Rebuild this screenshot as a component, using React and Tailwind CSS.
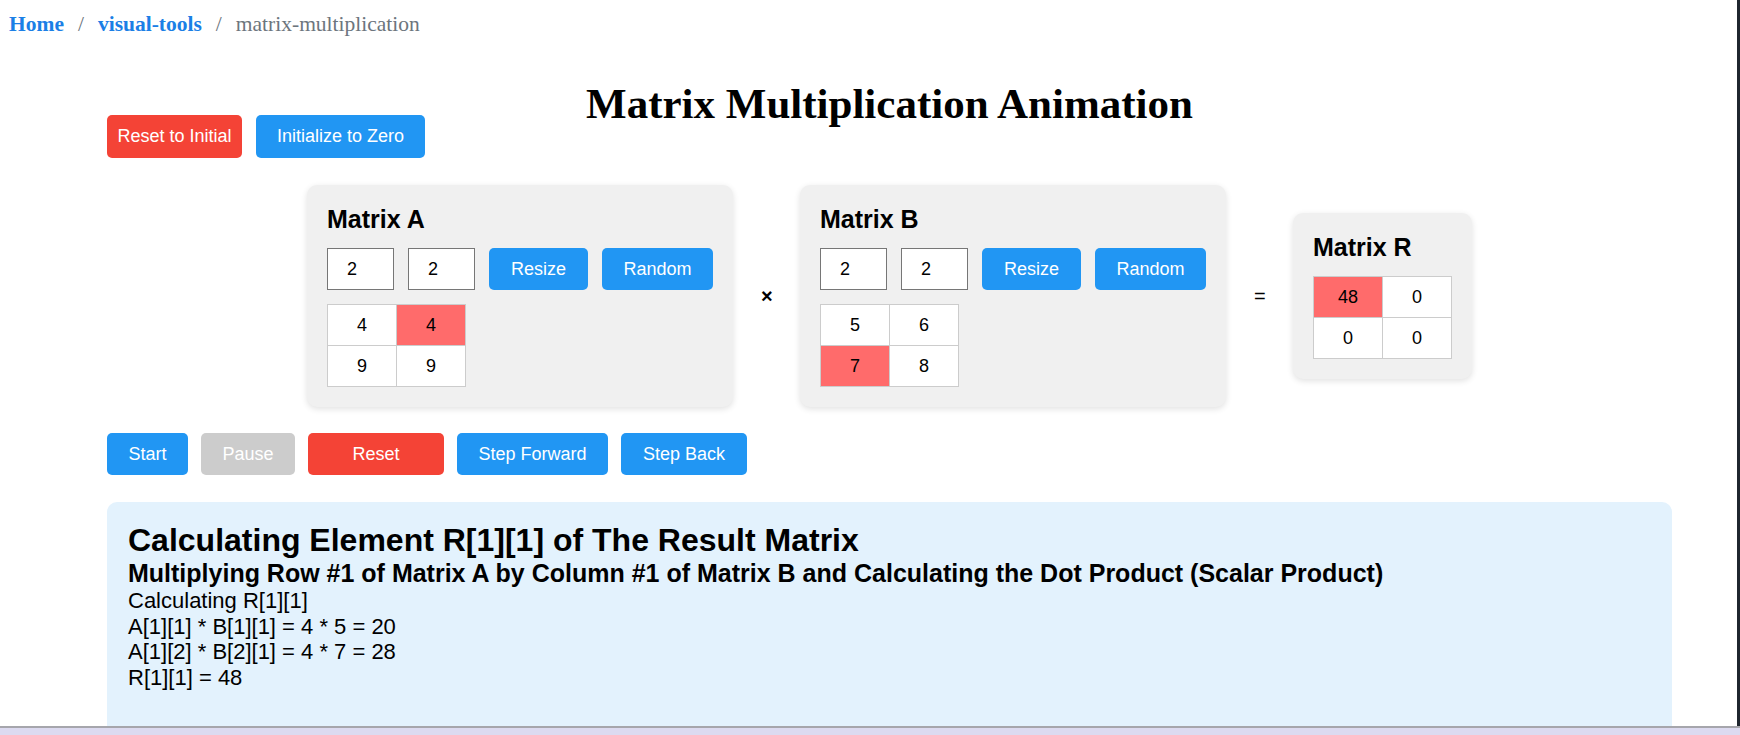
import { useState } from "react";

// cell values for the three matrices
const matrixA = [
  [4, 4],
  [9, 9],
];
const matrixB = [
  [5, 6],
  [7, 8],
];
const matrixR = [
  [48, 0],
  [0, 0],
];

function Grid({ values, hi }) {
  return (
    <div className="grid grid-cols-[69px_69px] w-fit border-l border-t border-[#cccccc]">
      {values.map((row, i) =>
        row.map((v, j) => (
          <div
            key={`${i}-${j}`}
            className={
              "h-[41px] flex items-center justify-center border-r border-b border-[#cccccc] text-[18px] " +
              (hi[0] === i && hi[1] === j ? "bg-[#ff6b6b]" : "bg-white")
            }
          >
            {v}
          </div>
        ))
      )}
    </div>
  );
}

function MatrixCard({ name, values, hi, sizable }) {
  return (
    <div className="bg-[#f0f0f0] rounded-[10px] p-5 shadow-[0_2px_6px_rgba(0,0,0,0.12)]">
      <h3 className="text-[25px] leading-[29px] font-bold mb-[14px]">Matrix {name}</h3>
      {sizable && (
        <div className="flex gap-[14px] mb-[14px]">
          <input
            type="text"
            defaultValue="2"
            className="w-[67px] h-[42px] border border-[#767676] bg-white pl-[19px] text-[18px] outline-none"
          />
          <input
            type="text"
            defaultValue="2"
            className="w-[67px] h-[42px] border border-[#767676] bg-white pl-[19px] text-[18px] outline-none"
          />
          <button className="w-[99px] h-[42px] bg-[#2196f3] text-white text-[18px] rounded-[5px]">
            Resize
          </button>
          <button className="w-[111px] h-[42px] bg-[#2196f3] text-white text-[18px] rounded-[5px]">
            Random
          </button>
        </div>
      )}
      <Grid values={values} hi={hi} />
    </div>
  );
}

export default function App() {
  const [running, setRunning] = useState(false);

  return (
    <div className="relative h-[735px] overflow-hidden bg-white text-black font-['Liberation_Sans',Arial,sans-serif]">
      {/* breadcrumb */}
      <nav className="pl-[9px] pt-[12px] text-[21.5px] leading-[24px] font-['Liberation_Serif','Times_New_Roman',serif]">
        <a className="font-bold text-[#1b7fe6]">Home</a>
        <span className="text-[#6c757d] mx-[14px]">/</span>
        <a className="font-bold text-[#1b7fe6]">visual-tools</a>
        <span className="text-[#6c757d] mx-[14px]">/</span>
        <span className="text-[#6c757d]">matrix-multiplication</span>
      </nav>

      <div className="ml-[107px] w-[1565px]">
        <h1 className="mt-[42px] text-center text-[43px] leading-[52px] font-bold font-['Liberation_Serif','Times_New_Roman',serif]">
          Matrix Multiplication Animation
        </h1>

        <div className="-mt-[15px] flex gap-[14px]">
          <button className="w-[135px] h-[43px] bg-[#f44336] text-white text-[18px] rounded-[5px]">
            Reset to Initial
          </button>
          <button className="w-[169px] h-[43px] bg-[#2196f3] text-white text-[18px] rounded-[5px]">
            Initialize to Zero
          </button>
        </div>

        {/* matrices */}
        <div className="mt-[27px] flex items-center justify-center gap-[28px]">
          <MatrixCard name="A" values={matrixA} hi={[0, 1]} sizable />
          <span className="w-[11px] text-center text-[20px] font-bold">×</span>
          <MatrixCard name="B" values={matrixB} hi={[1, 0]} sizable />
          <span className="w-[11px] text-center text-[20px]">=</span>
          <MatrixCard name="R" values={matrixR} hi={[0, 0]} />
        </div>

        {/* controls */}
        <div className="mt-[26px] flex gap-[13px]">
          <button
            onClick={() => setRunning(true)}
            className="w-[81px] h-[42px] bg-[#2196f3] text-white text-[18px] rounded-[5px]"
          >
            Start
          </button>
          <button
            disabled={!running}
            className="w-[94px] h-[42px] bg-[#cccccc] text-white text-[18px] rounded-[5px]"
          >
            Pause
          </button>
          <button className="w-[136px] h-[42px] bg-[#f44336] text-white text-[18px] rounded-[5px]">
            Reset
          </button>
          <button className="w-[151px] h-[42px] bg-[#2196f3] text-white text-[18px] rounded-[5px]">
            Step Forward
          </button>
          <button className="w-[126px] h-[42px] bg-[#2196f3] text-white text-[18px] rounded-[5px]">
            Step Back
          </button>
        </div>

        {/* explanation */}
        <div className="mt-[27px] h-[260px] bg-[#e3f2fd] rounded-[10px] px-[21px] pt-[20px]">
          <h2 className="text-[32px] leading-[37px] font-bold">
            Calculating Element R[1][1] of The Result Matrix
          </h2>
          <h3 className="text-[25px] leading-[29px] font-bold">
            Multiplying Row #1 of Matrix A by Column #1 of Matrix B and Calculating the Dot Product (Scalar Product)
          </h3>
          <div className="text-[22px] leading-[25.5px]">
            <div>Calculating R[1][1]</div>
            <div>A[1][1] * B[1][1] = 4 * 5 = 20</div>
            <div>A[1][2] * B[2][1] = 4 * 7 = 28</div>
            <div>R[1][1] = 48</div>
          </div>
        </div>
      </div>

      {/* window edges */}
      <div className="absolute top-0 right-0 w-[3px] h-full bg-[#1f262e]" />
      <div className="absolute bottom-0 left-0 right-0 h-[9px] border-t-2 border-[#a6a6ac] bg-[#dcdaf0]" />
    </div>
  );
}
